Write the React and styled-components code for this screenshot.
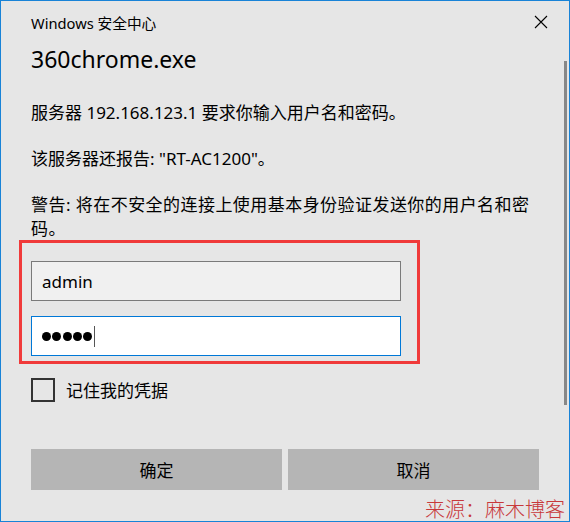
import styled, { createGlobalStyle } from "styled-components";

const GlobalStyle = createGlobalStyle`
  html, body {
    margin: 0;
    padding: 0;
    background: #e6e6e6;
  }
  * {
    box-sizing: border-box;
  }
`

const FONT = `"Noto Sans", "Noto Sans CJK SC", sans-serif`

// 창 전체
const Window = styled.div`
  position: relative;
  width: 570px;
  height: 522px;
  border: 1px solid #1883d7;
  background: #e6e6e6;
  font-family: ${FONT};
  color: #000;
`

const TitleBar = styled.div`
  display: flex;
  align-items: center;
  justify-content: space-between;
  height: 42px;
  padding: 0 21px 0 30px;
`

const Title = styled.span`
  font-size: 14.7px;
`

const CloseButton = styled.button`
  display: flex;
  align-items: center;
  justify-content: center;
  width: 14px;
  height: 14px;
  padding: 0;
  border: none;
  background: none;
`

const Content = styled.div`
  display: flex;
  flex-direction: column;
  padding: 0 30px;
`

const Heading = styled.div`
  margin-top: 1px;
  height: 31px;
  line-height: 30px;
  font-size: 23px;
`

const Text = styled.p`
  margin: ${props => props.gap || 22}px 0 0;
  font-size: 17px;
  line-height: 24px;
  letter-spacing: ${props => props.wide ? '0.45px' : '0'};
`

// 빨간 표시 박스
const Highlight = styled.div`
  display: flex;
  flex-direction: column;
  gap: 15px;
  width: 401px;
  margin: -1px 0 0 -12px;
  padding: 18px 15px 5px 9px;
  border: 3px solid #f03a3a;
`

const Field = styled.div`
  display: flex;
  align-items: center;
  width: 370px;
  height: 40px;
  padding: 0 10px;
  border: 1px solid ${props => props.focused ? '#0078d7' : '#7a7a7a'};
  background: ${props => props.focused ? '#ffffff' : '#f0f0f0'};
  font-size: 17px;
`

const Dot = styled.span`
  width: 9px;
  height: 9px;
  margin-right: 1.3px;
  border-radius: 50%;
  background: #000;
`

const Caret = styled.span`
  width: 1px;
  height: 21px;
  margin-left: 1px;
  background: #555;
`

const CheckRow = styled.label`
  display: flex;
  align-items: center;
  gap: 11px;
  margin-top: 13px;
  font-size: 17px;
`

const CheckBox = styled.span`
  width: 24px;
  height: 24px;
  border: 2px solid #333;
  background: #e6e6e6;
`

const Buttons = styled.div`
  display: grid;
  grid-template-columns: 1fr 1fr;
  gap: 6px;
  margin-top: 47px;
`

const Button = styled.button`
  height: 41px;
  border: none;
  background: #b5b5b5;
  font-family: ${FONT};
  font-size: 17px;
  color: #000;
`

const ScrollThumb = styled.div`
  position: absolute;
  top: 60px;
  right: 2px;
  width: 3px;
  height: 344px;
  background: #888;
`

const Watermark = styled.div`
  position: absolute;
  right: 4px;
  bottom: 2px;
  font-family: "Noto Sans CJK SC", sans-serif;
  font-weight: 300;
  font-size: 20px;
  line-height: 20px;
  color: #c8383a;
`

function App() {
  return (
    <>
      <GlobalStyle />
      <Window>
        <TitleBar>
          <Title>Windows 安全中心</Title>
          <CloseButton>
            <svg width="14" height="14" viewBox="0 0 14 14">
              <path d="M1 1 L13 13 M13 1 L1 13" stroke="#000" strokeWidth="1.1" fill="none" />
            </svg>
          </CloseButton>
        </TitleBar>

        <Content>
          <Heading>360chrome.exe</Heading>
          <Text gap={26}>服务器 192.168.123.1 要求你输入用户名和密码。</Text>
          <Text>该服务器还报告: "RT-AC1200"。</Text>
          <Text wide>警告: 将在不安全的连接上使用基本身份验证发送你的用户名和密码。</Text>

          <Highlight>
            <Field>admin</Field>
            <Field focused>
              {[0, 1, 2, 3, 4].map(i => <Dot key={i} />)}
              <Caret />
            </Field>
          </Highlight>

          <CheckRow>
            <CheckBox />
            记住我的凭据
          </CheckRow>

          <Buttons>
            <Button>确定</Button>
            <Button>取消</Button>
          </Buttons>
        </Content>

        <ScrollThumb />
        <Watermark>来源：麻木博客</Watermark>
      </Window>
    </>
  )
}

export default App
